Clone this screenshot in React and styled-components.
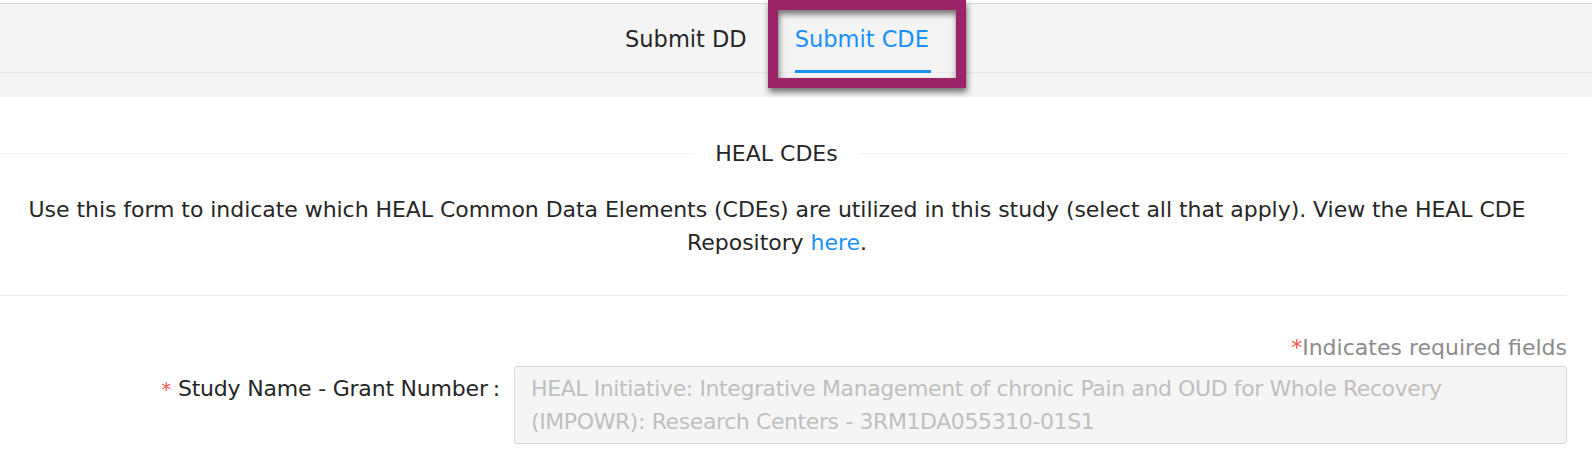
import React from 'react'
import styled, { createGlobalStyle } from 'styled-components'

const GlobalStyle = createGlobalStyle`
    body {
        margin: 0;
        background: #ffffff;
        font-family: "DejaVu Sans", "Liberation Sans", sans-serif;
        color: #262626;
    }
`;

const TabsBar = styled.div`
    margin-top: 3px;
    border-top: 1px solid #d6d6d6;
    background: #f4f4f4;
    padding-bottom: 24px;
`;

const TabNav = styled.div`
    display: flex;
    justify-content: center;
    gap: 48px;
    height: 68px;
    padding-right: 38px;
    border-bottom: 1px solid #e8e8e8;
`;

const Tab = styled.div`
    position: relative;
    padding-top: 19px;
    font-size: 22.5px;
    line-height: 33px;
    color: ${(p) => (p.$active ? '#1890ff' : '#262626')};
    white-space: nowrap;
`;

const InkBar = styled.span`
    position: absolute;
    left: 0;
    right: -2px;
    bottom: -1px;
    height: 3px;
    background: #1890ff;
`;

// recuadro de anotacion sobre la pestaña activa
const Highlight = styled.span`
    position: absolute;
    left: -27px;
    top: -4px;
    width: 198px;
    height: 88px;
    box-sizing: border-box;
    border: 10px solid #9b2367;
    filter: drop-shadow(1px 4px 3px rgba(0, 0, 0, 0.55));
    pointer-events: none;
`;

const Main = styled.div`
    padding-right: 25px;
`;

const Divider = styled.div`
    display: flex;
    align-items: center;
    margin-top: 40px;
    font-size: 22px;
    line-height: 33px;
    color: #262626;
    white-space: nowrap;
    &::before,
    &::after {
        content: '';
        border-top: 1px solid #f0f0f0;
    }
    &::before {
        flex: 693 1 0;
    }
    &::after {
        flex: 707 1 0;
    }
    span {
        padding: 0 21px;
    }
`;

const Description = styled.p`
    margin: 23px 0 0;
    padding-right: 13px;
    text-align: center;
    font-size: 22px;
    line-height: 33px;
    letter-spacing: -0.05px;
    a {
        color: #1890ff;
        text-decoration: none;
    }
`;

const Separator = styled.hr`
    margin: 36px 0 0;
    border: 0;
    border-top: 1px solid #ebebeb;
`;

const RequiredNote = styled.div`
    margin-top: 35px;
    text-align: right;
    font-size: 22px;
    line-height: 33px;
    color: #8c8c8c;
`;

const Star = styled.span`
    color: #ff4d4f;
    font-size: ${(p) => p.$size || '22px'};
    margin-right: ${(p) => p.$gap || '0'};
`;

const FormRow = styled.div`
    display: flex;
    align-items: flex-start;
    margin-top: 2px;
`;

const Label = styled.label`
    flex: 0 0 514px;
    display: flex;
    justify-content: flex-end;
    align-items: baseline;
    padding-top: 6px;
    font-size: 22px;
    line-height: 33px;
    letter-spacing: -0.2px;
    color: #262626;
    white-space: nowrap;
`;

const Colon = styled.span`
    margin: 0 14px 0 5px;
`;

const Field = styled.div`
    flex: 1;
    box-sizing: border-box;
    min-height: 78px;
    padding: 5px 16px;
    border: 1px solid #d9d9d9;
    border-radius: 3px;
    background: #f5f5f5;
    font-size: 22px;
    line-height: 33px;
    letter-spacing: -0.4px;
    color: #bfbfbf;
`;

const App = () => {
    return (
        <div>
            <GlobalStyle />
            <TabsBar>
                <TabNav>
                    <Tab>Submit DD</Tab>
                    <Tab $active>
                        Submit CDE
                        <InkBar />
                        <Highlight />
                    </Tab>
                </TabNav>
            </TabsBar>
            <Main>
                <Divider><span>HEAL CDEs</span></Divider>
                <Description>
                    Use this form to indicate which HEAL Common Data Elements (CDEs) are utilized in this study (select all that apply). View the HEAL CDE Repository <a href="#">here</a>.
                </Description>
                <Separator />
                <RequiredNote><Star>*</Star>Indicates required fields</RequiredNote>
                <FormRow>
                    <Label>
                        <Star $size="19px" $gap="7px">*</Star>
                        Study Name - Grant Number
                        <Colon>:</Colon>
                    </Label>
                    <Field>
                        HEAL Initiative: Integrative Management of chronic Pain and OUD for Whole Recovery
                        <br />
                        (IMPOWR): Research Centers - 3RM1DA055310-01S1
                    </Field>
                </FormRow>
            </Main>
        </div>
    )
}

export default App
